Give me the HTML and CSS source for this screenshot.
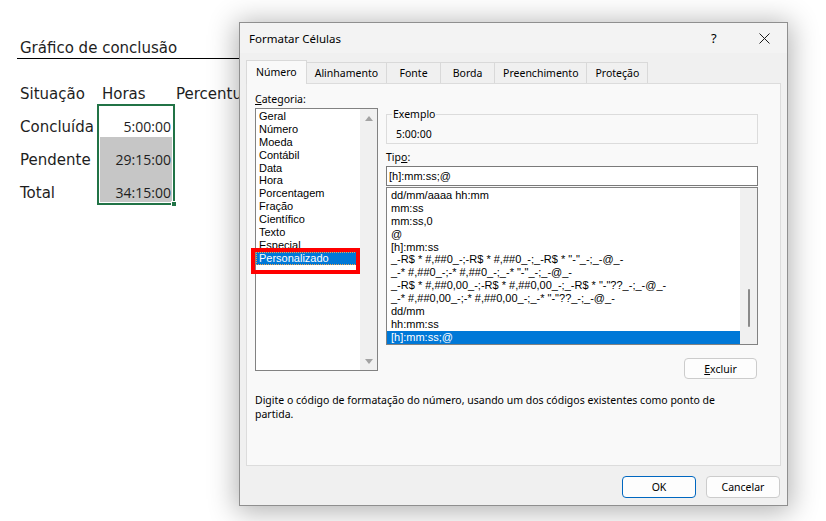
FILE: index.html
```html
<!DOCTYPE html>
<html lang="pt-BR">
<head>
<meta charset="utf-8">
<title>Formatar Células</title>
<link rel="stylesheet" href="styles.css">
</head>
<body>
<div class="sheet">
  <div class="sheet-title">Gráfico de conclusão</div>
  <div class="grid">
    <div class="cell a">Situação</div><div class="cell b-head">Horas</div><div class="cell c">Percentual</div>
    <div class="cell a">Concluída</div><div class="cell num">5:00:00</div><div class="cell c"></div>
    <div class="cell a">Pendente</div><div class="cell num fill">29:15:00</div><div class="cell c"></div>
    <div class="cell a">Total</div><div class="cell num fill">34:15:00</div><div class="cell c"></div>
  </div>
  <div class="selection"><span class="handle"></span></div>
</div>

<div class="dialog">
  <div class="titlebar">
    <span class="title">Formatar Células</span>
    <span class="help">?</span>
    <svg class="close" width="11" height="11" viewBox="0 0 11 11"><path d="M0.5 0.5 L10.5 10.5 M10.5 0.5 L0.5 10.5" stroke="#1a1a1a" stroke-width="1" fill="none"/></svg>
  </div>
  <div class="tabs">
    <div class="tab active">Número</div>
    <div class="tab">Alinhamento</div>
    <div class="tab">Fonte</div>
    <div class="tab">Borda</div>
    <div class="tab">Preenchimento</div>
    <div class="tab">Proteção</div>
  </div>
  <div class="panel">
    <div class="panel-body">
      <div class="left-col">
        <div class="label"><u>C</u>ategoria:</div>
        <div class="cat-wrap">
          <div class="listbox cat-list">
            <div class="items">
              <div class="item">Geral</div>
              <div class="item">Número</div>
              <div class="item">Moeda</div>
              <div class="item">Contábil</div>
              <div class="item">Data</div>
              <div class="item">Hora</div>
              <div class="item">Porcentagem</div>
              <div class="item">Fração</div>
              <div class="item">Científico</div>
              <div class="item">Texto</div>
              <div class="item">Especial</div>
              <div class="item selected focus">Personalizado</div>
            </div>
            <div class="vscroll arrows">
              <span class="arrow up"></span>
              <span class="arrow down"></span>
            </div>
          </div>
          <div class="highlight"></div>
        </div>
      </div>
      <div class="right-col">
        <fieldset class="example">
          <legend>Exemplo</legend>
          <div class="example-value">5:00:00</div>
        </fieldset>
        <div class="label tipo">Tip<u>o</u>:</div>
        <div class="input">[h]:mm:ss;@</div>
        <div class="listbox type-list">
          <div class="items">
            <div class="item">dd/mm/aaaa hh:mm</div>
            <div class="item">mm:ss</div>
            <div class="item">mm:ss,0</div>
            <div class="item">@</div>
            <div class="item">[h]:mm:ss</div>
            <div class="item">_-R$ * #,##0_-;-R$ * #,##0_-;_-R$ * "-"_-;_-@_-</div>
            <div class="item">_-* #,##0_-;-* #,##0_-;_-* "-"_-;_-@_-</div>
            <div class="item">_-R$ * #,##0,00_-;-R$ * #,##0,00_-;_-R$ * "-"??_-;_-@_-</div>
            <div class="item">_-* #,##0,00_-;-* #,##0,00_-;_-* "-"??_-;_-@_-</div>
            <div class="item">dd/mm</div>
            <div class="item">hh:mm:ss</div>
            <div class="item selected">[h]:mm:ss;@</div>
          </div>
          <div class="vscroll thin"><span class="thumb"></span></div>
        </div>
        <div class="excluir-row"><button class="btn excluir"><u>E</u>xcluir</button></div>
      </div>
    </div>
    <p class="desc">Digite o código de formatação do número, usando um dos códigos existentes como ponto de partida.</p>
  </div>
  <div class="buttons">
    <button class="btn ok">OK</button>
    <button class="btn">Cancelar</button>
  </div>
</div>
</body>
</html>
```

FILE: styles.css
```css
html, body {
  margin: 0;
  padding: 0;
}
body {
  width: 826px;
  height: 521px;
  overflow: hidden;
  background: #ffffff;
  position: relative;
}

/* ---------- spreadsheet ---------- */
.sheet {
  padding: 38px 0 0 17px;
  font-family: "DejaVu Sans", sans-serif;
  font-size: 15px;
  color: #1e1e1e;
}
.sheet-title {
  width: 220px;
  height: 20px;
  line-height: 20px;
  padding-left: 3px;
  border-bottom: 1px solid #000;
}
.grid {
  margin-top: 12px;
  display: grid;
  grid-template-columns: 80px 78px 120px;
  grid-auto-rows: 33px;
}
.cell {
  display: flex;
  align-items: flex-end;
  line-height: 20px;
  white-space: nowrap;
  overflow: hidden;
}
.cell.a { padding-left: 3px; }
.cell.b-head { padding-left: 5px; }
.cell.c { padding-left: 1px; }
.cell.num {
  justify-content: flex-end;
  padding-right: 4px;
  font-family: "Open Sans", sans-serif;
  font-size: 14px;
}
.cell.fill { background: #c6c6c6; }
.selection {
  position: absolute;
  left: 97px;
  top: 104px;
  width: 78px;
  height: 101px;
  box-sizing: border-box;
  border: 2px solid #217346;
  box-shadow: inset 0 0 0 1px #ffffff;
}
.handle {
  position: absolute;
  right: -4px;
  bottom: -4px;
  width: 6px;
  height: 6px;
  background: #217346;
  border: 1px solid #fff;
  box-sizing: border-box;
}

/* ---------- dialog ---------- */
.dialog {
  position: absolute;
  left: 239px;
  top: 22px;
  width: 549px;
  height: 484px;
  box-sizing: border-box;
  border: 1px solid #8f8f8f;
  background: #f0f0f0;
  box-shadow: 0 3px 26px 3px rgba(0, 0, 0, 0.3);
  display: flex;
  flex-direction: column;
  font-family: "Noto Sans", "Open Sans", sans-serif;
  font-size: 10.5px;
  color: #000;
}
.titlebar {
  height: 30px;
  display: flex;
  align-items: center;
  padding-left: 9px;
  background: #f3f3f3;
}
.title {
  font-size: 11.5px;
  flex: 1;
}
.help {
  font-size: 13px;
  width: 12px;
  margin-right: 36px;
}
.close {
  margin-right: 17px;
}
.tabs {
  margin-top: 7px;
  height: 23px;
  display: flex;
  align-items: flex-end;
  padding-left: 6px;
  position: relative;
  z-index: 1;
}
.tab {
  height: 21px;
  line-height: 20px;
  box-sizing: border-box;
  min-width: 55px;
  text-align: center;
  padding: 0 8px;
  border: 1px solid #d9d9d9;
  border-bottom: none;
  margin-right: -1px;
  background: #f0f0f0;
}
.tab.active {
  line-height: 22px;
  background: #f9f9f9;
  padding: 0 9px;
  margin-bottom: -1px;
  height: 24px;
}
.panel {
  margin: 0 6px;
  height: 383px;
  box-sizing: border-box;
  border: 1px solid #dcdcdc;
  background: #f9f9f9;
  padding: 8px 0 0 8px;
}
.panel-body {
  display: grid;
  grid-template-columns: 123px 372px;
  column-gap: 8px;
}
.label {
  line-height: 14px;
  height: 14px;
}
.cat-wrap {
  margin-top: 2px;
  position: relative;
}
.listbox {
  background: #fff;
  border: 1px solid #828282;
  display: flex;
  box-sizing: border-box;
  font-family: "Liberation Sans", Arial, sans-serif;
  font-size: 11px;
}
.cat-list {
  height: 263px;
}
.items {
  flex: 1;
  padding-top: 1px;
  min-width: 0;
}
.item {
  line-height: 12.9px;
  height: 12.9px;
  padding-left: 3px;
  white-space: nowrap;
}
.cat-list .item.selected {
  margin: 0 3px 0 0;
  padding-left: 3px;
}
.item.selected {
  background: #0078d7;
  color: #fff;
}
.item.focus {
  outline: 1px dotted #f3a34a;
  outline-offset: -1px;
}
.vscroll {
  width: 17px;
  background: #f0f0f0;
  display: flex;
  flex-direction: column;
  align-items: center;
}
.arrows {
  justify-content: space-between;
  padding: 7px 0 6px;
  box-sizing: border-box;
}
.arrow {
  width: 0;
  height: 0;
  border-left: 4px solid transparent;
  border-right: 4px solid transparent;
}
.arrow.up { border-bottom: 5px solid #a3a3a3; }
.arrow.down { border-top: 5px solid #a3a3a3; }
.highlight {
  position: absolute;
  left: -4px;
  top: 140px;
  width: 109px;
  height: 26px;
  box-sizing: border-box;
  border: 4px solid #ff0000;
}

.example {
  margin: 15px 0 0 0;
  padding: 0 0 2px 9px;
  border: 1px solid #dcdcdc;
  min-width: 0;
}
.example legend {
  padding: 0 1px;
  margin-left: -4px;
  line-height: 14px;
}
.example-value {
  padding-top: 6px;
  line-height: 14px;
}
.tipo {
  margin-top: 6px;
}
.input {
  margin-top: 2px;
  height: 20px;
  box-sizing: border-box;
  border: 1px solid #7a7a7a;
  background: #fff;
  line-height: 18px;
  padding-left: 2px;
  font-family: "Liberation Sans", Arial, sans-serif;
  font-size: 11px;
}
.type-list {
  margin-top: 1px;
  height: 158px;
}
.type-list .item {
  padding-left: 4px;
}
.thin {
  align-items: center;
}
.thumb {
  margin-top: 101px;
  width: 2px;
  height: 38px;
  background: #8a8a8a;
  border-radius: 1px;
}
.excluir-row {
  display: flex;
  justify-content: flex-end;
  margin-top: 13px;
  padding-right: 1px;
}
.btn {
  font-family: "Noto Sans", "Open Sans", sans-serif;
  font-size: 10.5px;
  color: #000;
  background: #fdfdfd;
  border: 1px solid #cccccc;
  border-radius: 4px;
  width: 74px;
  height: 22px;
  padding: 0;
  line-height: 20px;
}
.excluir {
  width: 73px;
  height: 21px;
}
.desc {
  margin: 14px 0 0 0;
  line-height: 14px;
  width: 500px;
}
.buttons {
  margin-top: 10px;
  display: flex;
  justify-content: flex-end;
  gap: 10px;
  padding-right: 7px;
}
.btn.ok {
  border-color: #0067c0;
}
```
